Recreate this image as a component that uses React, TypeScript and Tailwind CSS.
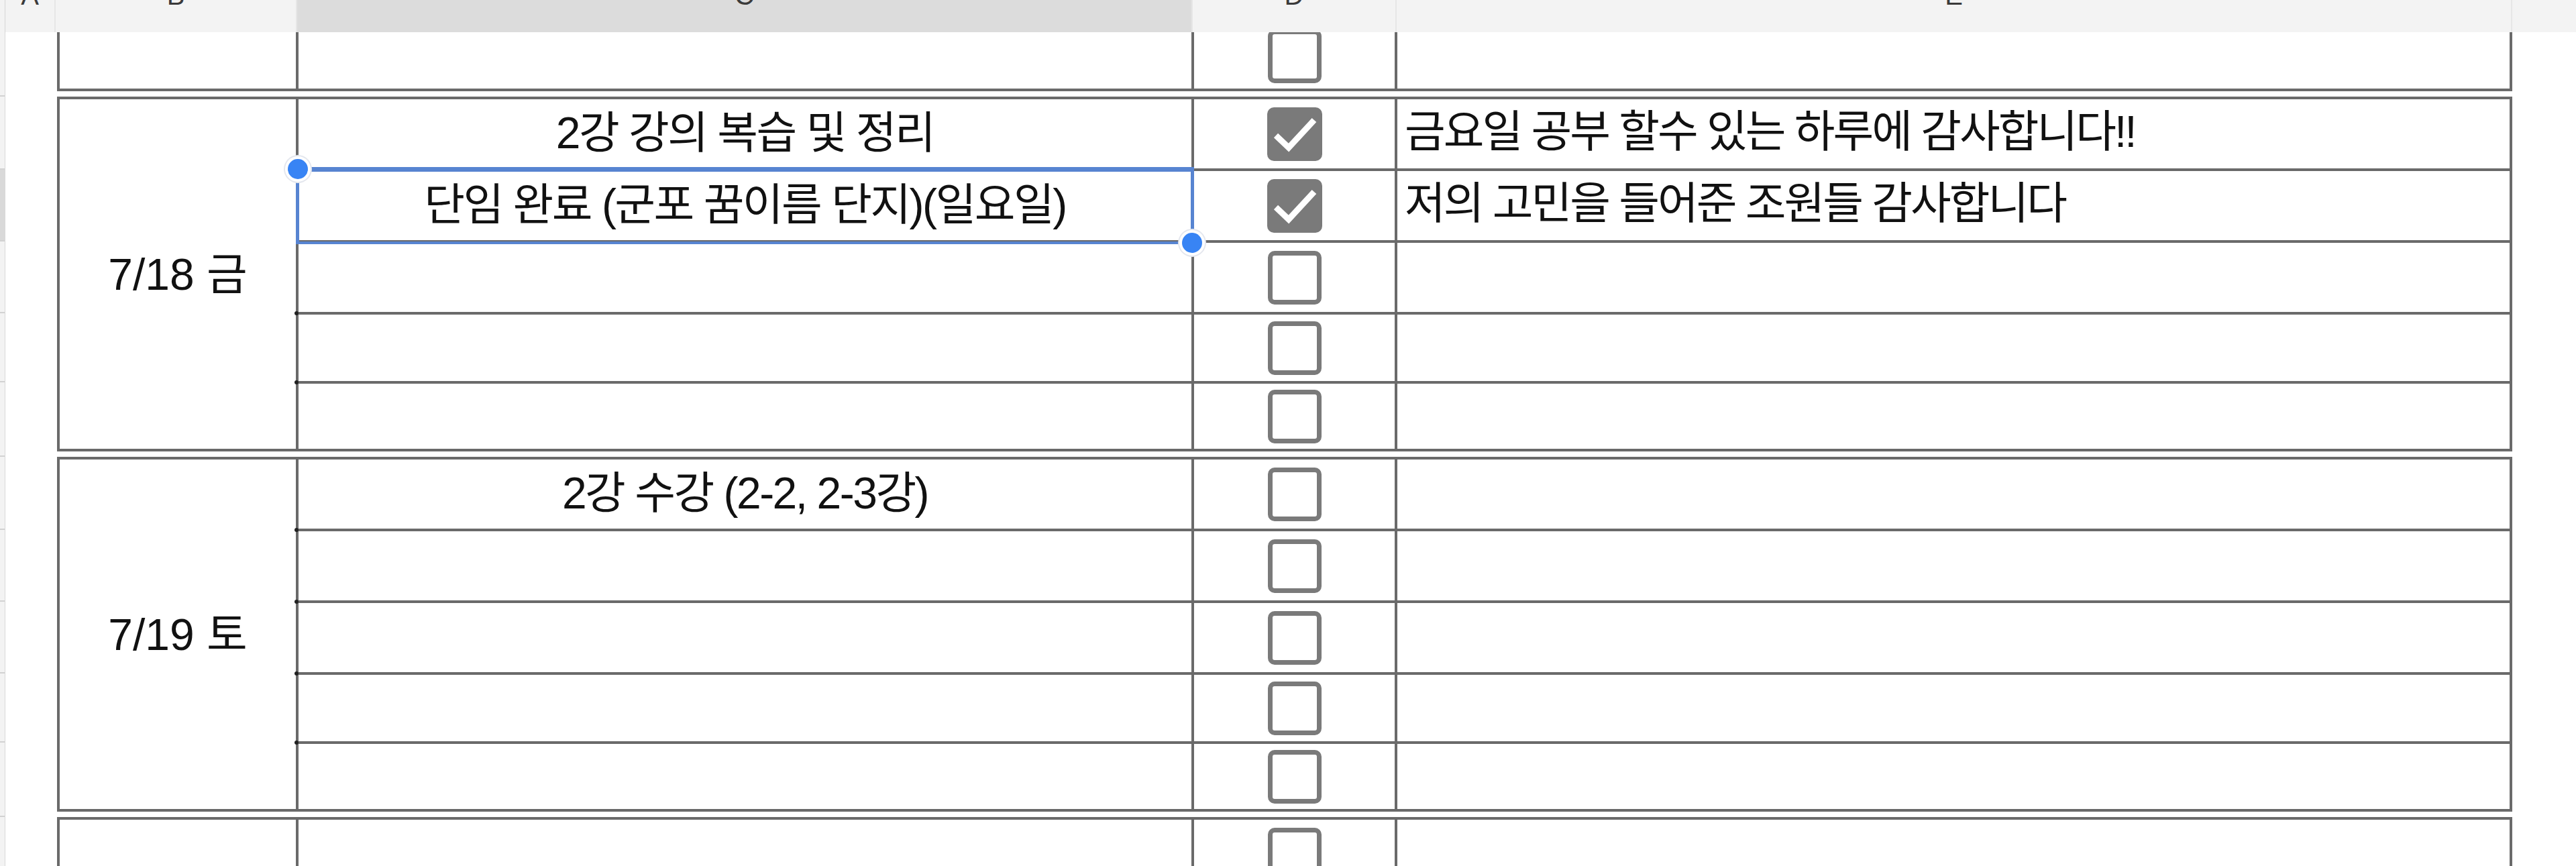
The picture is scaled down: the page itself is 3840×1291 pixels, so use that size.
import React from "react";

type Row = { task?: string; checked?: boolean; note?: string; selected?: boolean };
type Group = { date: string; rows: Row[] };

const emptyRows = (): Row[] => [{}, {}, {}, {}, {}];

const groups: Group[] = [
  { date: "", rows: emptyRows() },
  {
    date: "7/18 금",
    rows: [
      { task: "2강 강의 복습 및 정리", checked: true, note: "금요일 공부 할수 있는 하루에 감사합니다!!" },
      { task: "단임 완료 (군포 꿈이름 단지)(일요일)", checked: true, note: "저의 고민을 들어준 조원들 감사합니다", selected: true },
      {},
      {},
      {},
    ],
  },
  {
    date: "7/19 토",
    rows: [{ task: "2강 수강 (2-2, 2-3강)" }, {}, {}, {}, {}],
  },
  { date: "", rows: emptyRows() },
];

const rowHeights = ["h-[107px]", "h-[107px]", "h-[107px]", "h-[103px]", "h-[97px]"];
const stripHeights = ["h-[109px]", "h-[107px]", "h-[107px]", "h-[103px]", "h-[111px]"];

function CheckBox({ checked }: { checked?: boolean }) {
  if (checked) {
    return (
      <div className="w-[82px] h-[80px] rounded-[10px] bg-[#7a7a7a] flex items-center justify-center">
        <svg viewBox="0 0 82 80" className="w-[82px] h-[80px]">
          <path d="M13 42 L32 60 L70 19" stroke="#ffffff" strokeWidth="9" fill="none" strokeLinejoin="miter" />
        </svg>
      </div>
    );
  }
  return <div className="w-[80px] h-[80px] rounded-[10px] border-[7px] border-[#7a7a7a] bg-white" />;
}

function Handle({ pos }: { pos: "tl" | "br" }) {
  const place = pos === "tl" ? "left-[-16px] top-[-18px]" : "right-[-16px] bottom-[-19px]";
  return (
    <div
      className={`absolute ${place} z-20 w-[30px] h-[30px] rounded-full bg-[#3884f4] shadow-[0_0_0_4px_#ffffff,0_0_0_6px_#e4e7ee]`}
    />
  );
}

function HeaderCell({ w, letter, selected }: { w: string; letter: string; selected?: boolean }) {
  return (
    <div
      className={`${w} h-full flex justify-center border-r-2 border-[#e6e6e6] ${selected ? "bg-[#dcdcdc]" : "bg-[#f3f3f3]"}`}
    >
      <span className="text-[40px] leading-none mt-[-27px] text-[#3a3a3a]">{letter}</span>
    </div>
  );
}

function Dot() {
  return <div className="absolute left-[-6px] bottom-[-5px] w-[6px] h-[6px] bg-[#222] rounded-full z-10" />;
}

function GroupBlock({ g, gi }: { g: Group; gi: number }) {
  return (
    <div className="flex h-[537px]">
      <div className="w-[8px] flex flex-col border-r border-[#d9d9d9]">
        {stripHeights.map((h, i) => (
          <div
            key={i}
            className={`${h} border-b-2 border-[#d2d2d2] ${gi === 1 && i === 1 ? "bg-[#d9d9d9]" : "bg-[#f3f3f3]"}`}
          />
        ))}
      </div>
      <div className="w-[77px]" />
      <div className="w-[3660px] h-[529px] border-[4px] border-[#6a6a6a] flex">
        <div className="w-[356px] border-r-[4px] border-[#6a6a6a] flex items-center justify-center text-[66px] leading-none text-[#111]">
          {g.date}
        </div>
        <div className="flex-1 flex flex-col">
          {g.rows.map((r, i) => (
            <div
              key={i}
              className={`${rowHeights[i]} flex ${i < 4 ? "border-b-[4px] border-[#6a6a6a]" : ""}`}
            >
              <div className="relative w-[1335px] border-r-[4px] border-[#6a6a6a] flex items-center justify-center text-[66px] leading-none tracking-[-2.5px] text-[#111] pb-[4px] whitespace-nowrap">
                {r.task ?? ""}
                {i < 4 && !r.selected && <Dot />}
                {r.selected && (
                  <>
                    <div className="absolute top-[-6px] left-[-4px] right-[-4px] bottom-[-6px] border-[#5784d1] border-t-[7px] border-l-[5px] border-r-[5px] border-b-[4px] z-10" />
                    <Handle pos="tl" />
                    <Handle pos="br" />
                  </>
                )}
              </div>
              <div className="w-[303px] border-r-[4px] border-[#6a6a6a] flex items-center justify-center">
                <CheckBox checked={r.checked} />
              </div>
              <div className="flex-1 flex items-center pl-[11px] text-[66px] leading-none tracking-[-3px] text-[#111] pb-[8px] whitespace-nowrap">
                {r.note ?? ""}
              </div>
            </div>
          ))}
        </div>
      </div>
    </div>
  );
}

export default function App() {
  return (
    <div className="w-[3840px] h-[1291px] overflow-hidden bg-white font-['Liberation_Sans','Noto_Sans_CJK_KR',sans-serif]">
      <div className="flex h-[48px] bg-[#f3f3f3]">
        <div className="w-[8px] h-full border-r border-[#d5d5d5]" />
        <HeaderCell w="w-[75px]" letter="A" />
        <HeaderCell w="w-[360px]" letter="B" />
        <HeaderCell w="w-[1335px]" letter="C" selected />
        <HeaderCell w="w-[304px]" letter="D" />
        <HeaderCell w="w-[1663px]" letter="E" />
        <div className="flex-1" />
      </div>
      <div className="h-[1243px] overflow-hidden">
        <div className="mt-[-441px]">
          {groups.map((g, gi) => (
            <GroupBlock key={gi} g={g} gi={gi} />
          ))}
        </div>
      </div>
    </div>
  );
}
